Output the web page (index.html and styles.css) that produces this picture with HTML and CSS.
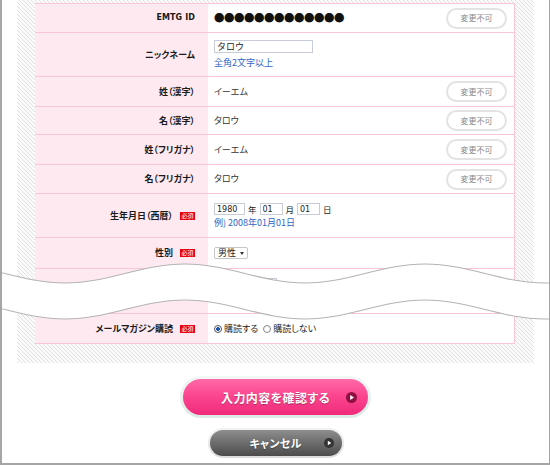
FILE: index.html
```html
<!DOCTYPE html>
<html lang="ja">
<head>
<meta charset="utf-8">
<title>会員情報の変更</title>
<link rel="stylesheet" href="styles.css">
</head>
<body>
<div class="page">
  <div class="hatch">
    <div class="form">
      <div class="row h29">
        <div class="label"><span class="latin">EMTG ID</span></div>
        <div class="value between">
          <span class="dots">●●●●●●●●●●●●●</span>
          <span class="locked">変更不可</span>
        </div>
      </div>
      <div class="row h44">
        <div class="label">ニックネーム</div>
        <div class="value stack">
          <input class="field w-nick" type="text" value="タロウ" readonly>
          <span class="note">全角2文字以上</span>
        </div>
      </div>
      <div class="row h30">
        <div class="label">姓（漢字）</div>
        <div class="value between"><span>イーエム</span><span class="locked">変更不可</span></div>
      </div>
      <div class="row h28">
        <div class="label">名（漢字）</div>
        <div class="value between"><span>タロウ</span><span class="locked">変更不可</span></div>
      </div>
      <div class="row h30">
        <div class="label">姓（フリガナ）</div>
        <div class="value between"><span>イーエム</span><span class="locked">変更不可</span></div>
      </div>
      <div class="row h29">
        <div class="label">名（フリガナ）</div>
        <div class="value between"><span>タロウ</span><span class="locked">変更不可</span></div>
      </div>
      <div class="row h44">
        <div class="label">生年月日（西暦）<span class="req">必須</span></div>
        <div class="value stack date">
          <div class="date-line">
            <input class="field num w-year" type="text" value="1980" readonly><span class="unit">年</span>
            <input class="field num w-md" type="text" value="01" readonly><span class="unit">月</span>
            <input class="field num w-md" type="text" value="01" readonly><span class="unit">日</span>
          </div>
          <span class="note tight">例) 2008年01月01日</span>
        </div>
      </div>
      <div class="row h31">
        <div class="label">性別<span class="req">必須</span></div>
        <div class="value">
          <span class="select">男性<span class="caret"></span></span>
        </div>
      </div>
      <div class="row h45">
        <div class="label"></div>
        <div class="value stack hidden-row">
          <span class="field w-hidden"></span>
        </div>
      </div>
      <div class="row h30">
        <div class="label">メールマガジン購読<span class="req">必須</span></div>
        <div class="value radios">
          <span class="radio checked"></span><span class="radio-text">購読する</span>
          <span class="radio"></span><span class="radio-text">購読しない</span>
        </div>
      </div>
    </div>
  </div>

  <div class="actions">
    <div class="btn-ring pink-ring">
      <div class="btn pink">
        <span class="btn-text">入力内容を確認する</span>
        <svg class="arrow" width="11" height="11" viewBox="0 0 11 11"><circle cx="5.5" cy="5.5" r="5.5" fill="#8e1040"/><polygon points="4.2,3 8,5.5 4.2,8" fill="#fff"/></svg>
      </div>
    </div>
    <div class="btn-ring gray-ring">
      <div class="btn gray">
        <span class="btn-text small">キャンセル</span>
        <svg class="arrow" width="10" height="10" viewBox="0 0 10 10"><circle cx="5" cy="5" r="5" fill="#333"/><polygon points="3.8,2.7 7.3,5 3.8,7.3" fill="#fff"/></svg>
      </div>
    </div>
  </div>

  <svg class="wave" width="550" height="465" viewBox="0 0 550 465">
    <path d="M -55 264 C -11 264 21 283 65 283 C 109 283 141 264 185 264 C 229 264 261 283 305 283 C 349 283 381 264 425 264 C 469 264 501 283 545 283 C 589 283 621 264 665 264 L 665 300 C 621 300 589 319 545 319 C 501 319 469 300 425 300 C 381 300 349 319 305 319 C 261 319 229 300 185 300 C 141 300 109 319 65 319 C 21 319 -11 300 -55 300 Z" fill="#fff"/>
    <path d="M -55 264 C -11 264 21 283 65 283 C 109 283 141 264 185 264 C 229 264 261 283 305 283 C 349 283 381 264 425 264 C 469 264 501 283 545 283 C 589 283 621 264 665 264" fill="none" stroke="#b4b4b4" stroke-width="1.2"/>
    <path d="M -55 300 C -11 300 21 319 65 319 C 109 319 141 300 185 300 C 229 300 261 319 305 319 C 349 319 381 300 425 300 C 469 300 501 319 545 319 C 589 319 621 300 665 300" fill="none" stroke="#b4b4b4" stroke-width="1.2"/>
  </svg>
</div>
</body>
</html>
```

FILE: styles.css
```css
html, body {
  margin: 0;
  padding: 0;
  background: #fff;
}

body {
  font-family: "Noto Sans CJK JP", "Noto Sans", sans-serif;
  font-size: 9px;
  color: #333;
  font-feature-settings: "palt";
}

.page {
  position: relative;
  width: 550px;
  height: 465px;
  box-sizing: border-box;
  border-left: 2px solid #a5a5a5;
  border-right: 1px solid #a5a5a5;
  border-bottom: 2px solid #a5a5a5;
  overflow: hidden;
}

.hatch {
  margin: 0 15px;
  padding: 3px 19px 19px 18px;
  background: repeating-linear-gradient(45deg, #e0e0e0 0 1px, #fbfbfb 1px 2.83px);
}

.form {
  background: #fff;
  border-top: 1px solid #f9c6d6;
  border-right: 1px solid #f9c6d6;
}

.row {
  display: grid;
  grid-template-columns: 173px 1fr;
  box-sizing: border-box;
  border-bottom: 1px solid #f9c6d6;
}

.h28 { height: 28px; }
.h29 { height: 29px; }
.h30 { height: 30px; }
.h31 { height: 31px; }
.h44 { height: 44px; }
.h45 { height: 45px; }

.label {
  background: #ffe9f0;
  display: flex;
  align-items: center;
  justify-content: flex-end;
  gap: 7px;
  padding-right: 13px;
  font-weight: bold;
  font-size: 9px;
  color: #1a1a1a;
  line-height: 12px;
}

.latin {
  font-family: "DejaVu Sans", sans-serif;
  font-size: 8px;
  letter-spacing: 0.1px;
}

.req {
  display: inline-flex;
  align-items: center;
  justify-content: center;
  width: 15px;
  height: 8px;
  background: #e60012;
  color: #fff;
  font-size: 6px;
  font-weight: normal;
  line-height: 8px;
}

.value {
  display: flex;
  align-items: center;
  padding: 0 7px 0 6px;
  line-height: 12px;
}

.between {
  justify-content: space-between;
}

.stack {
  flex-direction: column;
  align-items: flex-start;
  justify-content: flex-start;
  padding-top: 7px;
}

.stack.date {
  padding-top: 9px;
}

.hidden-row {
  padding-top: 9px;
}

.dots {
  font-size: 10.5px;
  letter-spacing: -0.5px;
  color: #111;
  font-feature-settings: normal;
}

.locked {
  display: flex;
  align-items: center;
  justify-content: center;
  box-sizing: border-box;
  width: 61px;
  height: 21px;
  border: 2px solid #e3e3e3;
  border-radius: 11px;
  background: #fff;
  font-size: 8px;
  color: #888;
}

.field {
  display: block;
  box-sizing: border-box;
  height: 13px;
  margin: 0;
  padding: 0 2px;
  border: 1px solid #c8ccd6;
  background: #fff;
  font-family: "Noto Sans CJK JP", sans-serif;
  font-size: 9px;
  color: #222;
  outline: none;
}

.w-nick { width: 99px; }
.w-hidden { width: 63px; }

.num {
  font-family: "DejaVu Sans", sans-serif;
  font-size: 8px;
  height: 12px;
}

.w-year { width: 31px; }
.w-md { width: 23px; }

.date-line {
  display: flex;
  align-items: center;
}

.unit {
  margin: 0 3px 0 3px;
  font-size: 8.5px;
  color: #222;
}

.note {
  margin-top: 4px;
  color: #2f64c8;
}

.note.tight {
  margin-top: 2px;
}

.select {
  display: inline-flex;
  align-items: center;
  gap: 4px;
  box-sizing: border-box;
  height: 12px;
  padding: 0 3px;
  border: 1px solid #c6c6c6;
  border-radius: 2px;
  background: #fff;
  color: #222;
}

.caret {
  width: 0;
  height: 0;
  border-top: 3px solid #333;
  border-left: 2.5px solid transparent;
  border-right: 2.5px solid transparent;
}

.radio {
  display: inline-block;
  box-sizing: border-box;
  width: 8px;
  height: 8px;
  border-radius: 50%;
  border: 1px solid #8c8c8c;
  background: radial-gradient(circle, #fff 0 2px, #e6e6e6 4px);
}

.radio.checked {
  border-color: #555;
  background: radial-gradient(circle, #1d55b0 0 1.6px, #fff 2.2px);
}

.radio-text {
  margin: 0 5px 0 2px;
  color: #222;
}

.actions {
  display: flex;
  flex-direction: column;
  align-items: center;
  gap: 10px;
  padding-top: 13px;
}

.btn-ring {
  box-sizing: border-box;
}

.pink-ring {
  width: 191px;
  height: 42px;
  padding: 3px;
  border-radius: 21px;
  background: linear-gradient(#f3f7f6, #dde9e5);
}

.gray-ring {
  width: 136px;
  height: 30px;
  padding: 2px;
  border-radius: 15px;
  background: linear-gradient(#f2f2f2, #dcdcdc);
}

.btn {
  display: grid;
  grid-template-columns: 1fr auto 1fr;
  align-items: center;
  height: 100%;
  border-radius: 18px;
}

.btn .btn-text {
  grid-column: 2;
  color: #fff;
  font-weight: bold;
  font-size: 12px;
  letter-spacing: 0.4px;
  text-shadow: 0 1px 1px rgba(0, 0, 0, 0.3);
}

.btn .btn-text.small {
  font-size: 11px;
  letter-spacing: 0.3px;
}

.btn .arrow {
  grid-column: 3;
  justify-self: end;
}

.pink {
  background: linear-gradient(#ff6aa8 0%, #fc4690 45%, #ef2a7a 100%);
}

.pink .arrow {
  margin-right: 11px;
}

.gray {
  border-radius: 13px;
  background: linear-gradient(#8e8e8e 0%, #6c6c6c 50%, #4c4c4c 100%);
}

.gray .arrow {
  margin-right: 8px;
}

.wave {
  position: absolute;
  top: 0;
  left: -2px;
  pointer-events: none;
}
```
